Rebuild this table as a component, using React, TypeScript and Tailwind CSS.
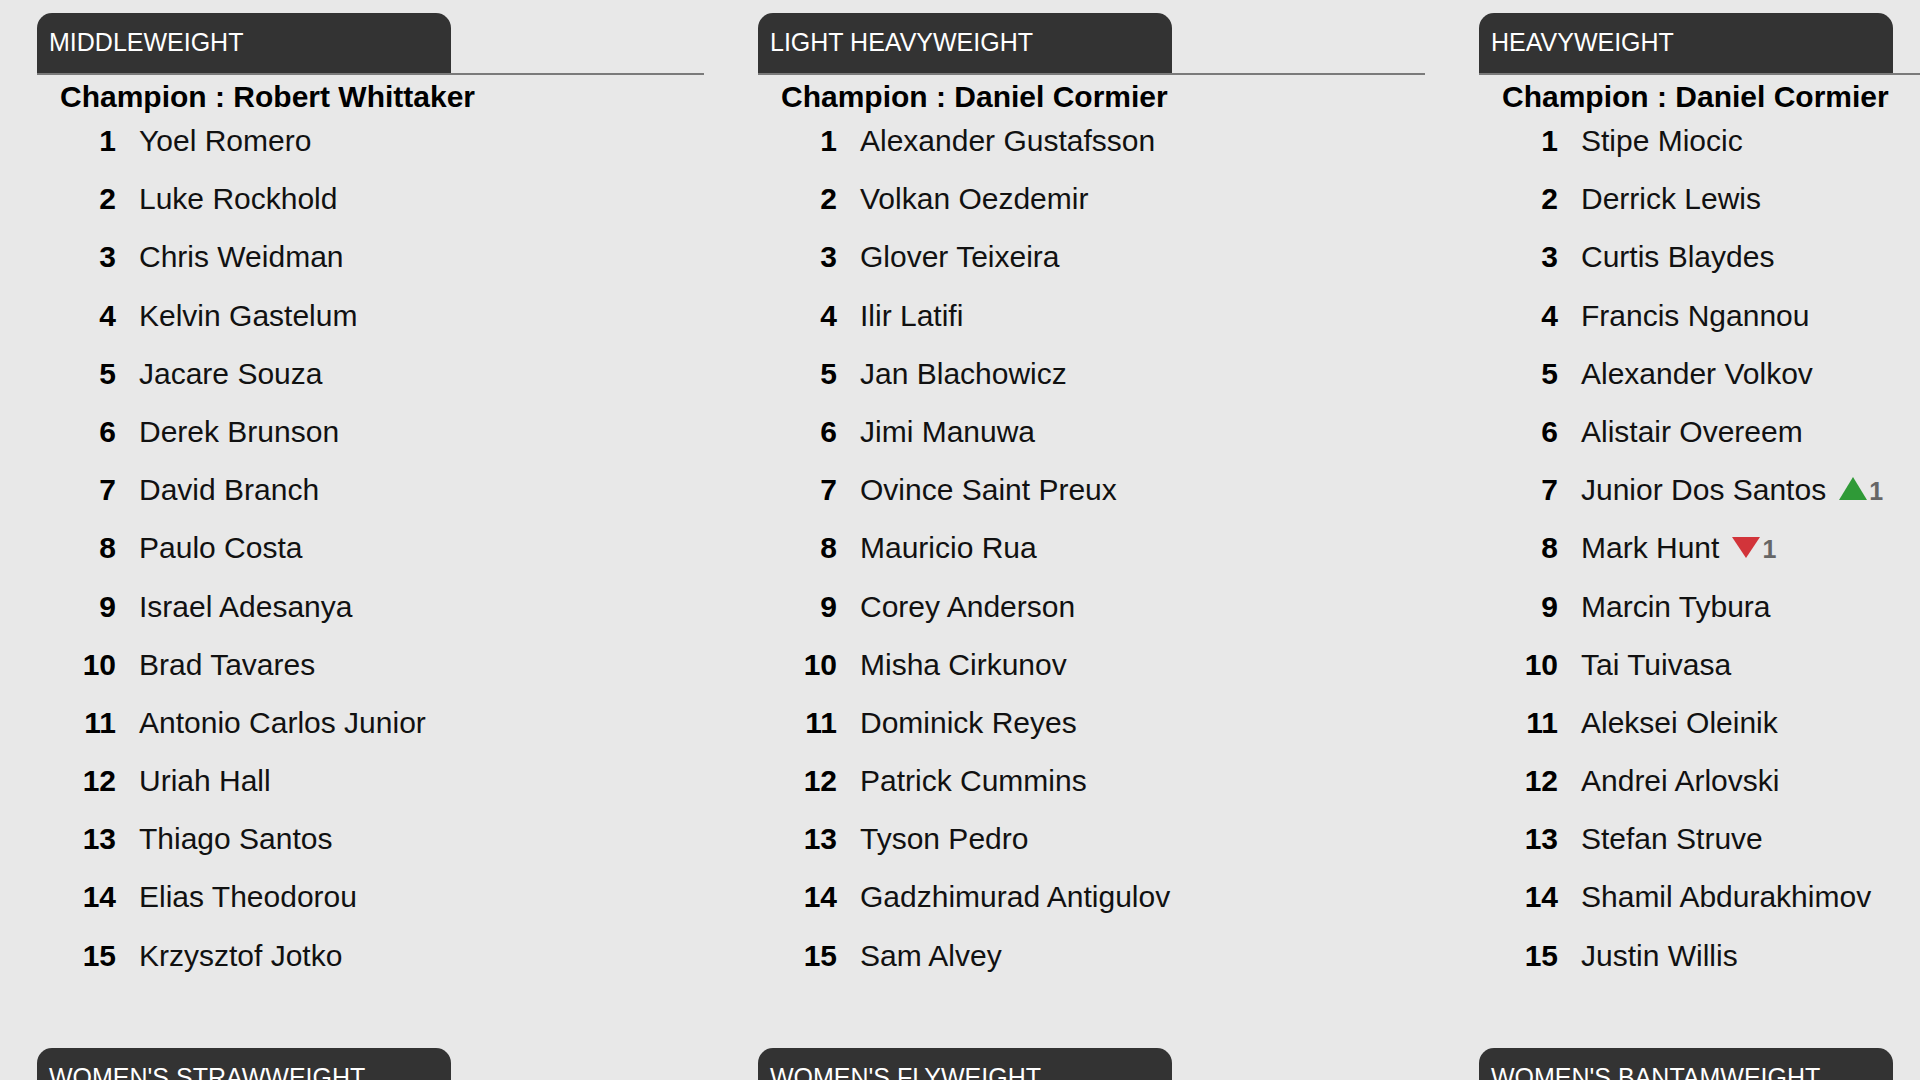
import React from 'react';

type Trend = { dir: 'up' | 'down'; by: number };

interface Fighter {
  name: string;
  trend?: Trend;
}

interface Division {
  title: string;
  champion?: string;
  fighters: Fighter[];
}

const f = (names: string[]): Fighter[] => names.map(name => ({ name }));

const topRow: Division[] = [
  {
    title: 'MIDDLEWEIGHT',
    champion: 'Robert Whittaker',
    fighters: f([
      'Yoel Romero',
      'Luke Rockhold',
      'Chris Weidman',
      'Kelvin Gastelum',
      'Jacare Souza',
      'Derek Brunson',
      'David Branch',
      'Paulo Costa',
      'Israel Adesanya',
      'Brad Tavares',
      'Antonio Carlos Junior',
      'Uriah Hall',
      'Thiago Santos',
      'Elias Theodorou',
      'Krzysztof Jotko'
    ])
  },
  {
    title: 'LIGHT HEAVYWEIGHT',
    champion: 'Daniel Cormier',
    fighters: f([
      'Alexander Gustafsson',
      'Volkan Oezdemir',
      'Glover Teixeira',
      'Ilir Latifi',
      'Jan Blachowicz',
      'Jimi Manuwa',
      'Ovince Saint Preux',
      'Mauricio Rua',
      'Corey Anderson',
      'Misha Cirkunov',
      'Dominick Reyes',
      'Patrick Cummins',
      'Tyson Pedro',
      'Gadzhimurad Antigulov',
      'Sam Alvey'
    ])
  },
  {
    title: 'HEAVYWEIGHT',
    champion: 'Daniel Cormier',
    fighters: [
      { name: 'Stipe Miocic' },
      { name: 'Derrick Lewis' },
      { name: 'Curtis Blaydes' },
      { name: 'Francis Ngannou' },
      { name: 'Alexander Volkov' },
      { name: 'Alistair Overeem' },
      { name: 'Junior Dos Santos', trend: { dir: 'up', by: 1 } },
      { name: 'Mark Hunt', trend: { dir: 'down', by: 1 } },
      { name: 'Marcin Tybura' },
      { name: 'Tai Tuivasa' },
      { name: 'Aleksei Oleinik' },
      { name: 'Andrei Arlovski' },
      { name: 'Stefan Struve' },
      { name: 'Shamil Abdurakhimov' },
      { name: 'Justin Willis' }
    ]
  }
];

const bottomRow: Division[] = [
  { title: "WOMEN'S STRAWWEIGHT", fighters: [] },
  { title: "WOMEN'S FLYWEIGHT", fighters: [] },
  { title: "WOMEN'S BANTAMWEIGHT", fighters: [] }
];

const TrendMark: React.FC<{ trend: Trend }> = ({ trend }) => (
  <span className="ml-[13px] inline-flex items-baseline">
    {trend.dir === 'up' ? (
      <svg width="28" height="23" viewBox="0 0 28 23" className="self-baseline">
        <polygon points="0,23 14,0 28,23" fill="#2f9a37" />
      </svg>
    ) : (
      <svg width="28" height="21" viewBox="0 0 28 21" className="self-baseline">
        <polygon points="0,0 28,0 14,21" fill="#d2343a" />
      </svg>
    )}
    <span className="ml-[2px] text-[25px] font-bold text-[#666666]">{trend.by}</span>
  </span>
);

const DivisionCard: React.FC<{ division: Division }> = ({ division }) => (
  <div className="w-[667px] shrink-0">
    {/* Tab header */}
    <div className="flex border-b-2 border-[#7a7a7a]">
      <div className="flex h-[60px] w-[414px] items-center rounded-t-[15px] bg-[#333333] pl-[12px] text-[25px] text-white">
        {division.title}
      </div>
    </div>

    {division.champion && (
      <div className="mt-[5px] pl-[23px] text-[30px] font-bold leading-[34px] text-black">
        Champion : {division.champion}
      </div>
    )}

    {division.fighters.length > 0 && (
      <ul className="mt-[10px]">
        {division.fighters.map((fighter, i) => (
          <li key={fighter.name} className="flex h-[58.2px] text-[30px] leading-[34px]">
            <span className="w-[79px] text-right font-bold text-black">{i + 1}</span>
            <span className="ml-[23px] whitespace-nowrap text-[#111111]">
              {fighter.name}
              {fighter.trend && <TrendMark trend={fighter.trend} />}
            </span>
          </li>
        ))}
      </ul>
    )}
  </div>
);

export default function App() {
  return (
    <div className="h-[1080px] w-[1920px] overflow-hidden bg-[#e8e8e8] font-['Liberation_Sans',Arial,sans-serif]">
      <div className="pl-[37px] pt-[13px]">
        <div className="flex gap-x-[54px]">
          {topRow.map(d => (
            <DivisionCard key={d.title} division={d} />
          ))}
        </div>
        <div className="mt-[51px] flex gap-x-[54px]">
          {bottomRow.map(d => (
            <DivisionCard key={d.title} division={d} />
          ))}
        </div>
      </div>
    </div>
  );
}
